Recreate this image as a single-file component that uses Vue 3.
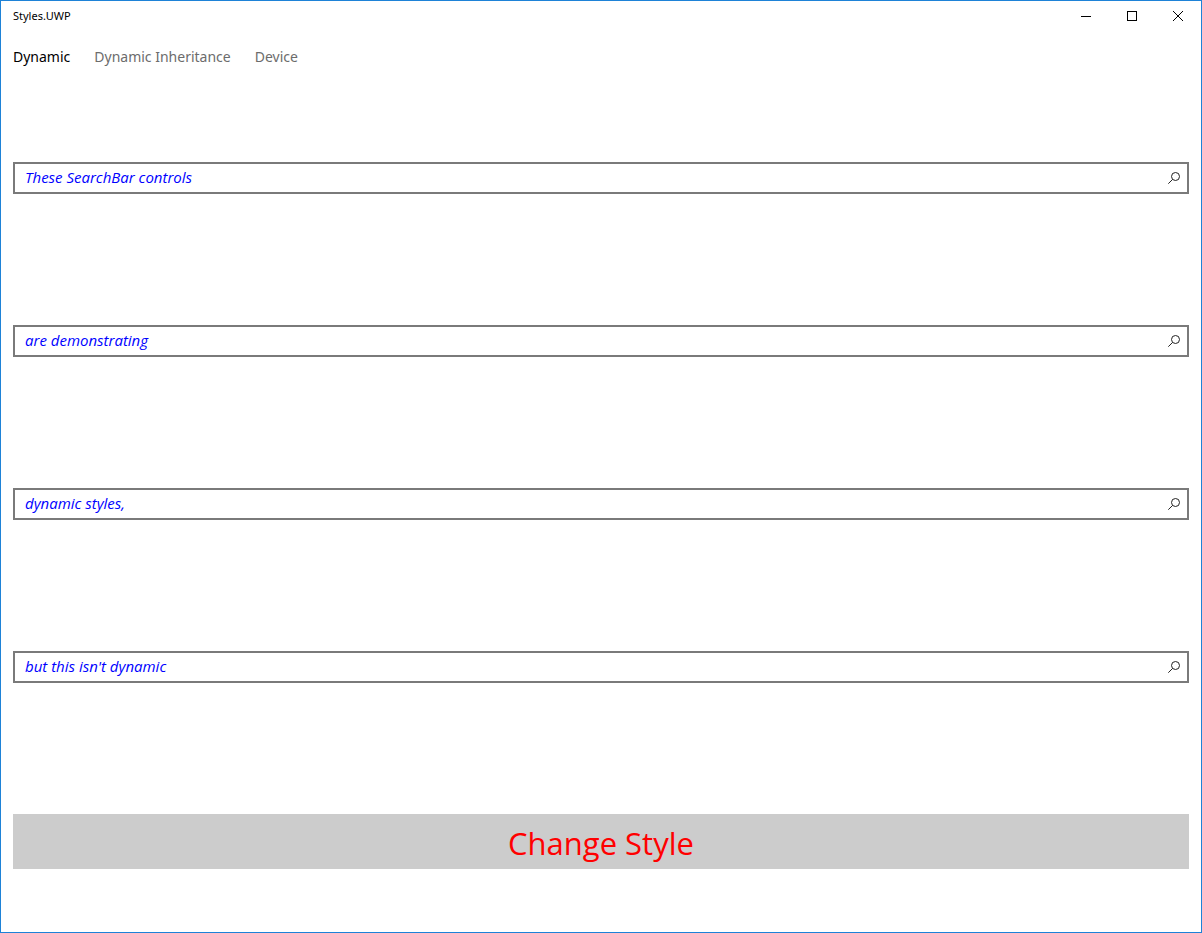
<script setup>
import { ref } from 'vue'

const tabs = ['Dynamic', 'Dynamic Inheritance', 'Device']
const active = ref('Dynamic')
const searches = ref([
  'These SearchBar controls',
  'are demonstrating',
  'dynamic styles,',
  "but this isn't dynamic",
])
</script>

<template>
  <div class="window">
    <header class="titlebar">
      <h1 class="title">Styles.UWP</h1>
      <div class="controls">
        <button type="button" aria-label="Minimize">
          <svg viewBox="0 0 10 10" shape-rendering="crispEdges"><path d="M0 5.5H10" /></svg>
        </button>
        <button type="button" aria-label="Maximize">
          <svg viewBox="0 0 10 10" shape-rendering="crispEdges"><path d="M.5 .5H9.5V9.5H.5Z" /></svg>
        </button>
        <button type="button" aria-label="Close">
          <svg viewBox="0 0 10 10"><path d="M0 0L10 10M10 0L0 10" /></svg>
        </button>
      </div>
    </header>

    <nav class="tabs">
      <button
        v-for="tab in tabs"
        :key="tab"
        type="button"
        class="tab"
        :class="{ active: tab === active }"
        @click="active = tab"
      >{{ tab }}</button>
    </nav>

    <main class="content">
      <form v-for="(text, i) in searches" :key="i" class="search" @submit.prevent>
        <input v-model="searches[i]" type="text" class="field" :aria-label="'Search ' + (i + 1)" />
        <button type="submit" class="go" aria-label="Search">
          <svg viewBox="0 0 12 12"><circle cx="7.5" cy="4.5" r="4" /><path d="M4.6 7.4L.3 11.7" /></svg>
        </button>
      </form>
      <button type="button" class="change">Change Style</button>
    </main>
  </div>
</template>

<style>
body {
  margin: 0;
  background: #fff;
}
</style>

<style scoped>
.window {
  box-sizing: border-box;
  min-height: 100vh;
  display: flex;
  flex-direction: column;
  border: 1px solid #1e82d7;
  background: #fff;
  font-family: "Noto Sans", "Open Sans", sans-serif;
}

button {
  margin: 0;
  padding: 0;
  border: 0;
  background: none;
  font-family: inherit;
}

svg {
  display: block;
  fill: none;
  stroke: #000;
  stroke-width: 1;
}

.titlebar {
  display: flex;
  align-items: center;
  justify-content: space-between;
  height: 30px;
  padding-left: 12px;
}

.title {
  margin: 0;
  font-size: 11px;
  line-height: 16px;
  font-weight: 400;
}

.controls {
  display: flex;
}

.controls button {
  display: grid;
  place-items: center;
  width: 46px;
  height: 30px;
}

.controls svg {
  width: 10px;
  height: 10px;
}

.tabs {
  display: flex;
  gap: 24px;
  height: 52px;
  padding: 0 12px;
}

.tab {
  font-size: 14px;
  line-height: 52px;
  color: #6c6c6c;
}

.tab.active {
  color: #000;
}

.content {
  flex: 1;
  display: flex;
  flex-direction: column;
  justify-content: space-between;
  gap: 24px;
  padding: 79px 12px 63px;
}

.search {
  display: flex;
  box-sizing: border-box;
  height: 32px;
  border: 2px solid #7a7a7a;
}

.field {
  flex: 1;
  min-width: 0;
  padding: 0 10px 2px;
  border: 0;
  outline: 0;
  background: none;
  color: #00f;
  font-family: "Open Sans", "Noto Sans", sans-serif;
  font-size: 15px;
  font-style: italic;
}

.go {
  display: grid;
  place-items: center;
  width: 26px;
}

.go svg {
  width: 12px;
  height: 12px;
  stroke: #222;
}

.change {
  box-sizing: border-box;
  height: 55px;
  padding-top: 3px;
  background: #ccc;
  color: #f00;
  font-family: "Open Sans", "Noto Sans", sans-serif;
  font-size: 31px;
  line-height: 52px;
}
</style>
